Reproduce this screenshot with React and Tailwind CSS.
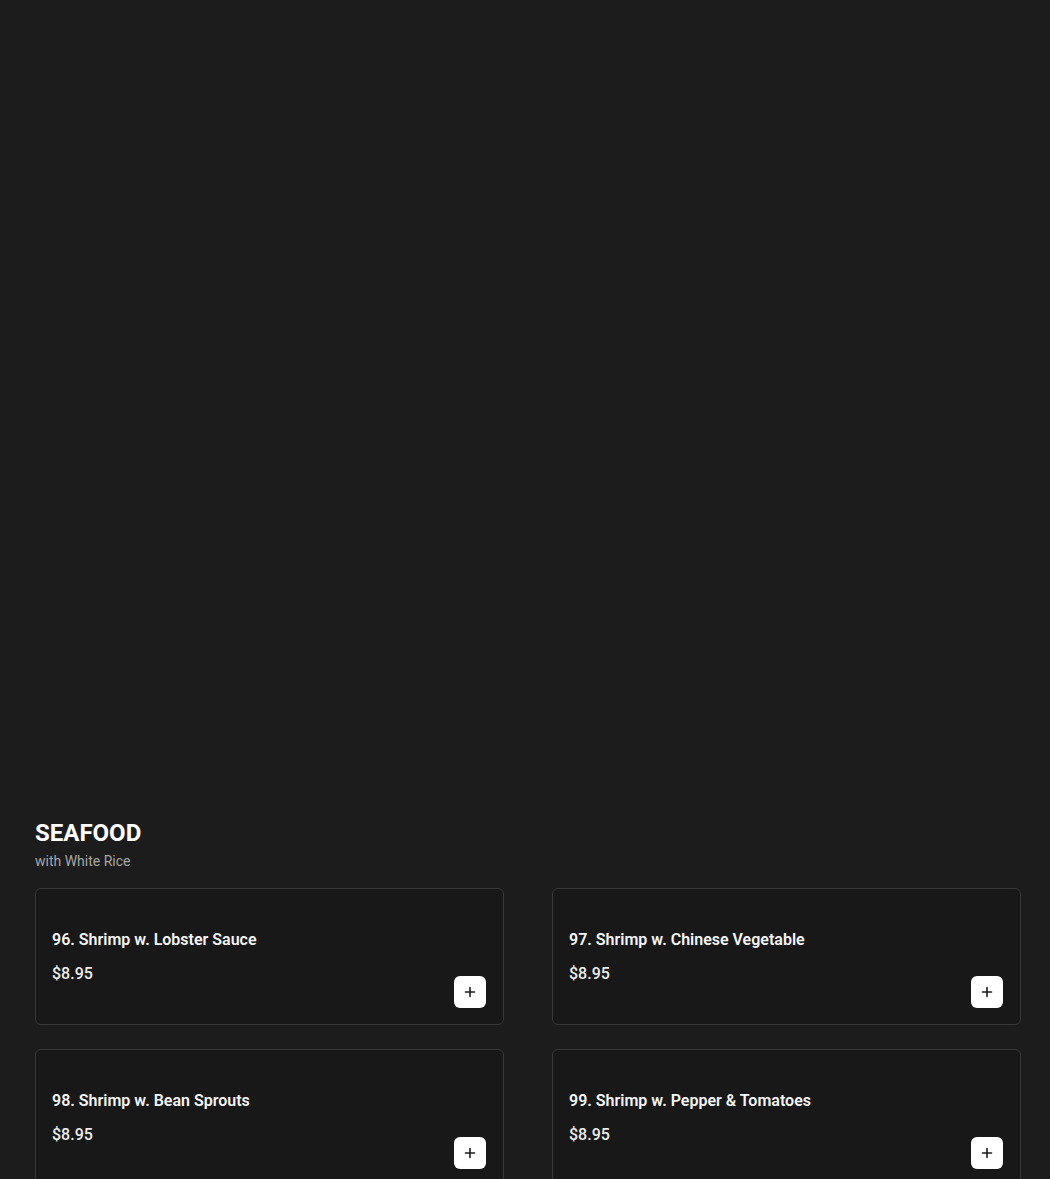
import React from 'react'

const ITEMS = [
  { id: 96, name: 'Shrimp w. Lobster Sauce', price: '$8.95' },
  { id: 97, name: 'Shrimp w. Chinese Vegetable', price: '$8.95' },
  { id: 98, name: 'Shrimp w. Bean Sprouts', price: '$8.95' },
  { id: 99, name: 'Shrimp w. Pepper & Tomatoes', price: '$8.95' }
]

function PlusIcon() {
  return (
    <svg width="12" height="12" viewBox="0 0 12 12" fill="none">
      <path d="M6 1.5v9M1.5 6h9" stroke="#1c1c1c" strokeWidth="1.6" strokeLinecap="round" />
    </svg>
  )
}

function MenuCard({ item }) {
  return (
    <div className="flex h-[137px] justify-between rounded-[6px] border border-[#383838] bg-[#181818] p-4 pr-[17px]">
      <div className="pt-[23px]">
        <h3 className="text-[16px] font-semibold leading-6 text-[#f5f5f5]">
          {item.id}. {item.name}
        </h3>
        <p className="mt-[10px] text-[16px] font-medium leading-6 text-[#ededed]">{item.price}</p>
      </div>
      <button className="flex h-8 w-8 items-center justify-center self-end rounded-[6px] bg-white">
        <PlusIcon />
      </button>
    </div>
  )
}

export default function App() {
  return (
    <div className="min-h-[1179px] bg-[#1c1c1c] pl-[35px] pr-[29px] pt-[819px] font-['Roboto',sans-serif]">
      {/* Seafood section */}
      <h2 className="text-[24px] font-bold leading-7 text-white">SEAFOOD</h2>
      <p className="mt-[4px] text-[14px] leading-5 text-[#a6a6a6]">with White Rice</p>
      <div className="mt-[17px] grid grid-cols-2 gap-x-[48px] gap-y-[24px]">
        {ITEMS.map(item => (
          <MenuCard key={item.id} item={item} />
        ))}
      </div>
    </div>
  )
}
